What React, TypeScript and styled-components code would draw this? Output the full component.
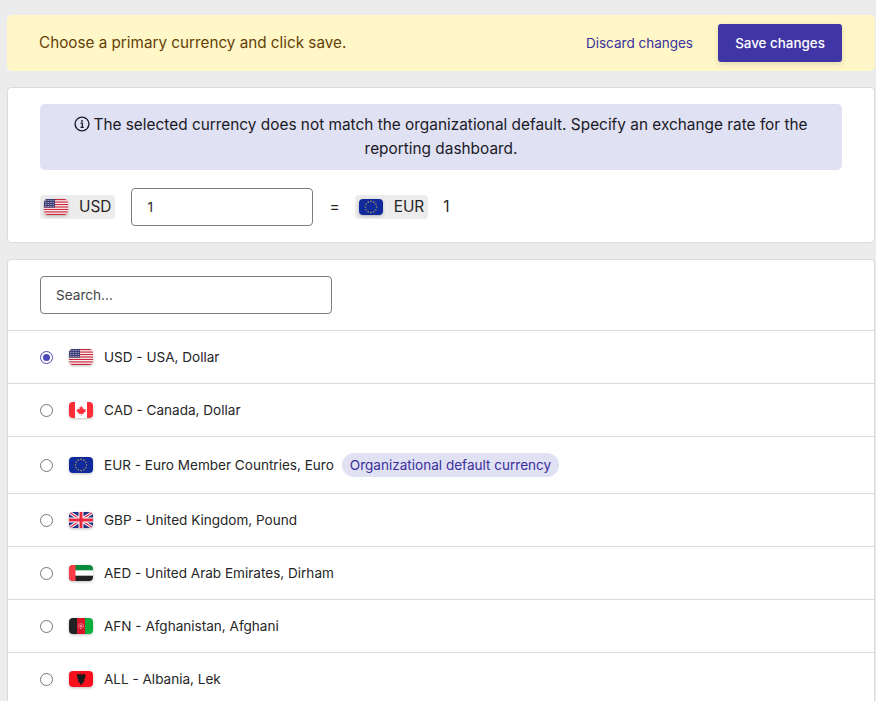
import React from "react";
import styled, { createGlobalStyle } from "styled-components";

const Global = createGlobalStyle`
  html, body { margin: 0; padding: 0; background: #ececec; overflow: hidden; height: 701px; }
  body { font-family: Inter, "Liberation Sans", sans-serif; color: #202124; -webkit-font-smoothing: antialiased; }
  * { box-sizing: border-box; }
`;

const Page = styled.div`
  padding: 15px 1px 0 7px;
  display: flex;
  flex-direction: column;
  width: 876px;
  height: 701px;
  overflow: hidden;
`;

const Banner = styled.div`
  height: 56px;
  background: #fff7c7;
  border-radius: 5px;
  display: flex;
  align-items: center;
  padding: 0 33px 0 32px;
  flex-shrink: 0;
`;

const BannerText = styled.div`
  flex: 1;
  font-size: 15.25px;
  color: #643f06;
  padding-bottom: 1px;
`;

const DiscardLink = styled.a`
  font-size: 13.5px;
  color: #3a2f9c;
  margin-right: 25px;
`;

const SaveButton = styled.button`
  width: 124px;
  height: 38px;
  padding: 0;
  border: none;
  border-radius: 3px;
  background: #4035a5;
  color: #fff;
  font: 500 13.4px Inter, sans-serif;
  box-shadow: 0 2px 6px rgba(0, 0, 0, 0.12);
`;

const Card = styled.section`
  background: #fff;
  border: 1px solid #dcdbd9;
  border-radius: 4px;
  flex-shrink: 0;
`;

const ExchangeCard = styled(Card)`
  margin-top: 16px;
  height: 156px;
  padding: 16px 32px 0;
`;

const Notice = styled.div`
  height: 66px;
  padding: 0 32px;
  background: #e0e1f3;
  border-radius: 5px;
  display: flex;
  align-items: center;
  justify-content: center;
  text-align: center;
  font-size: 15.39px;
  line-height: 24px;
  color: #1a1a26;
`;

const NoticeBody = styled.div`
  padding-bottom: 1px;
`;

const InfoIcon = styled.svg`
  width: 16px;
  height: 16px;
  vertical-align: -2.5px;
  margin-right: 3px;
`;

const RateRow = styled.div`
  margin-top: 18px;
  height: 38px;
  display: flex;
  align-items: center;
  font-size: 15.4px;
  line-height: 22px;
`;

const CurrencyTag = styled.div`
  height: 24px;
  display: flex;
  align-items: center;
  padding: 0 4px 1px;
  gap: 11px;
  background: #ececec;
  border-radius: 4px;
  color: #262626;
`;

const FlagBox = styled.span`
  display: block;
  width: 24px;
  height: 16px;
  border-radius: 4px;
  overflow: hidden;
  flex-shrink: 0;
  box-shadow: 0 1px 3px rgba(0, 0, 0, 0.25);
  svg { display: block; width: 24px; height: 16px; }
`;

const TagFlag = styled(FlagBox)`
  margin-top: 1px;
`;

const RateInput = styled.input`
  width: 182px;
  height: 38px;
  margin-left: 16px;
  padding: 0 15px;
  border: 1px solid #7f7d79;
  border-radius: 4px;
  font: 13.6px Inter, sans-serif;
  color: #262626;
  outline: none;
`;

const Equals = styled.span`
  margin: 0 15px 0 16px;
  padding-bottom: 1px;
  color: #262626;
`;

const RateValue = styled.span`
  margin-left: 15px;
  color: #262626;
`;

const ListCard = styled(Card)`
  flex: 1;
  margin-top: 16px;
  border-bottom: none;
`;

const SearchBar = styled.div`
  height: 71px;
  padding: 16px 32px;
  border-bottom: 1px solid #dcdbd9;
`;

const SearchInput = styled.input`
  display: block;
  width: 292px;
  height: 38px;
  padding: 0 15px;
  border: 1px solid #7f7d79;
  border-radius: 4px;
  font: 13.6px Inter, sans-serif;
  color: #262626;
  outline: none;
  &::placeholder { color: #444; opacity: 1; }
`;

const Row = styled.label<{ $tall?: boolean }>`
  height: ${(p) => (p.$tall ? 57 : 53)}px;
  padding-left: 32px;
  display: flex;
  align-items: center;
  border-bottom: 1px solid #dcdbd9;
  font-size: 13.56px;
  color: #262626;
`;

const Radio = styled.span<{ $checked?: boolean }>`
  width: 13px;
  height: 13px;
  border-radius: 50%;
  border: 1px solid ${(p) => (p.$checked ? "#4f46b8" : "#767676")};
  margin-right: 16px;
  flex-shrink: 0;
  display: flex;
  align-items: center;
  justify-content: center;
  &::after {
    content: "";
    display: ${(p) => (p.$checked ? "block" : "none")};
    width: 7px;
    height: 7px;
    border-radius: 50%;
    background: #4f46b8;
  }
`;

const RowLabel = styled.span`
  margin-left: 11px;
`;

const Badge = styled.span`
  margin-left: 8px;
  height: 24px;
  padding: 0 8px;
  display: flex;
  align-items: center;
  border-radius: 12px;
  background: #e0e1f3;
  color: #3a2f9c;
  font-size: 13.55px;
`;

const UsFlag = () => (
  <svg viewBox="0 0 24 16">
    <rect width="24" height="16" fill="#fff" />
    {[0, 2.46, 4.92, 7.38, 9.84, 12.3, 14.76].map((y) => (
      <rect key={y} y={y} width="24" height="1.23" fill="#c8283c" />
    ))}
    <rect width="11" height="8.6" fill="#3f3f78" />
    <path d="M1 1.5h9M1 3.5h9M1 5.5h9M1 7.5h9" stroke="#c9c9e0" strokeWidth=".8" strokeDasharray=".8 .8" />
  </svg>
);

const CaFlag = () => (
  <svg viewBox="0 0 24 16">
    <rect width="24" height="16" fill="#fff" />
    <rect width="6" height="16" fill="#ff2b37" />
    <rect x="18" width="6" height="16" fill="#ff2b37" />
    <path d="M12 3.6l1 1.9 1-.5-.4 2.5 1.3-1.1.4 1 1.5-.2-.5 1.6.6.4-2.4 1.9.2 1-2.2-.3v1.9h-.6v-1.9l-2.2.3.2-1-2.4-1.9.6-.4-.5-1.6 1.5.2.4-1 1.3 1.1-.4-2.5 1 .5z" fill="#ff2b37" />
  </svg>
);

const EuFlag = () => (
  <svg viewBox="0 0 24 16">
    <rect width="24" height="16" fill="#10299b" />
    {Array.from({ length: 12 }).map((_, i) => {
      const a = (i * Math.PI) / 6;
      return <circle key={i} cx={12 + 5.6 * Math.cos(a)} cy={8 + 5.6 * Math.sin(a)} r="0.8" fill="#a8985a" />;
    })}
  </svg>
);

const GbFlag = () => (
  <svg viewBox="0 0 24 16">
    <rect width="24" height="16" fill="#1f2f86" />
    <path d="M0 0L24 16M24 0L0 16" stroke="#fff" strokeWidth="3.2" />
    <path d="M0 0L24 16M24 0L0 16" stroke="#e8283f" strokeWidth="1.2" />
    <path d="M12 0V16M0 8H24" stroke="#fff" strokeWidth="5" />
    <path d="M12 0V16M0 8H24" stroke="#e8283f" strokeWidth="3" />
  </svg>
);

const AeFlag = () => (
  <svg viewBox="0 0 24 16">
    <rect width="24" height="16" fill="#fff" />
    <rect width="24" height="5.33" fill="#0a8a3c" />
    <rect y="10.67" width="24" height="5.33" fill="#222" />
    <rect width="6.5" height="16" fill="#ff3b47" />
  </svg>
);

const AfFlag = () => (
  <svg viewBox="0 0 24 16">
    <rect width="8" height="16" fill="#222" />
    <rect x="8" width="8" height="16" fill="#d9152c" />
    <rect x="16" width="8" height="16" fill="#0bae3a" />
    <circle cx="12" cy="8" r="2.4" fill="none" stroke="#f3c4c4" strokeWidth="1" strokeDasharray="1 .7" />
    <rect x="11.4" y="6.8" width="1.2" height="2.4" fill="#f7dcdc" />
  </svg>
);

const AlFlag = () => (
  <svg viewBox="0 0 24 16">
    <rect width="24" height="16" fill="#fa0f1c" />
    <path d="M11.4 2.6h1.2l.2 1.6 1.2-.9 2.4-.5-.6 1.5 1-.1-.8 1.4.8.1-1 1.3.6.2-1.2 1-.2 1 .8 1-1.2.2.4 1.2-1.2-.2-.4 1-1.2 2-1.2-2-.4-1-1.2.2.4-1.2-1.2-.2.8-1-.2-1-1.2-1 .6-.2-1-1.3.8-.1-.8-1.4 1 .1-.6-1.5 2.4.5 1.2.9z" fill="#1a1a1a" />
  </svg>
);

const rows = [
  { flag: <UsFlag />, label: "USD - USA, Dollar", checked: true },
  { flag: <CaFlag />, label: "CAD - Canada, Dollar" },
  { flag: <EuFlag />, label: "EUR - Euro Member Countries, Euro", badge: "Organizational default currency" },
  { flag: <GbFlag />, label: "GBP - United Kingdom, Pound" },
  { flag: <AeFlag />, label: "AED - United Arab Emirates, Dirham" },
  { flag: <AfFlag />, label: "AFN - Afghanistan, Afghani" },
  { flag: <AlFlag />, label: "ALL - Albania, Lek" },
];

export default function App() {
  return (
    <Page>
      <Global />
      <Banner>
        <BannerText>Choose a primary currency and click save.</BannerText>
        <DiscardLink>Discard changes</DiscardLink>
        <SaveButton>Save changes</SaveButton>
      </Banner>
      <ExchangeCard>
        <Notice>
          <NoticeBody>
            <InfoIcon viewBox="0 0 16 16" fill="none">
              <circle cx="8" cy="8" r="6.9" stroke="#1a1a26" strokeWidth="1.4" />
              <circle cx="8" cy="4.9" r="0.95" fill="#1a1a26" />
              <path d="M6.5 7.2H8.3V11.1M6.5 11.3H9.8" stroke="#1a1a26" strokeWidth="1.3" />
            </InfoIcon>
            The selected currency does not match the organizational default. Specify an exchange rate for the reporting dashboard.
          </NoticeBody>
        </Notice>
        <RateRow>
          <CurrencyTag>
            <TagFlag><UsFlag /></TagFlag>
            USD
          </CurrencyTag>
          <RateInput defaultValue="1" />
          <Equals>=</Equals>
          <CurrencyTag>
            <TagFlag><EuFlag /></TagFlag>
            EUR
          </CurrencyTag>
          <RateValue>1</RateValue>
        </RateRow>
      </ExchangeCard>
      <ListCard>
        <SearchBar>
          <SearchInput placeholder="Search..." />
        </SearchBar>
        {rows.map((r) => (
          <Row key={r.label} $tall={!!r.badge}>
            <Radio $checked={r.checked} />
            <FlagBox>{r.flag}</FlagBox>
            <RowLabel>{r.label}</RowLabel>
            {r.badge && <Badge>{r.badge}</Badge>}
          </Row>
        ))}
      </ListCard>
    </Page>
  );
}
